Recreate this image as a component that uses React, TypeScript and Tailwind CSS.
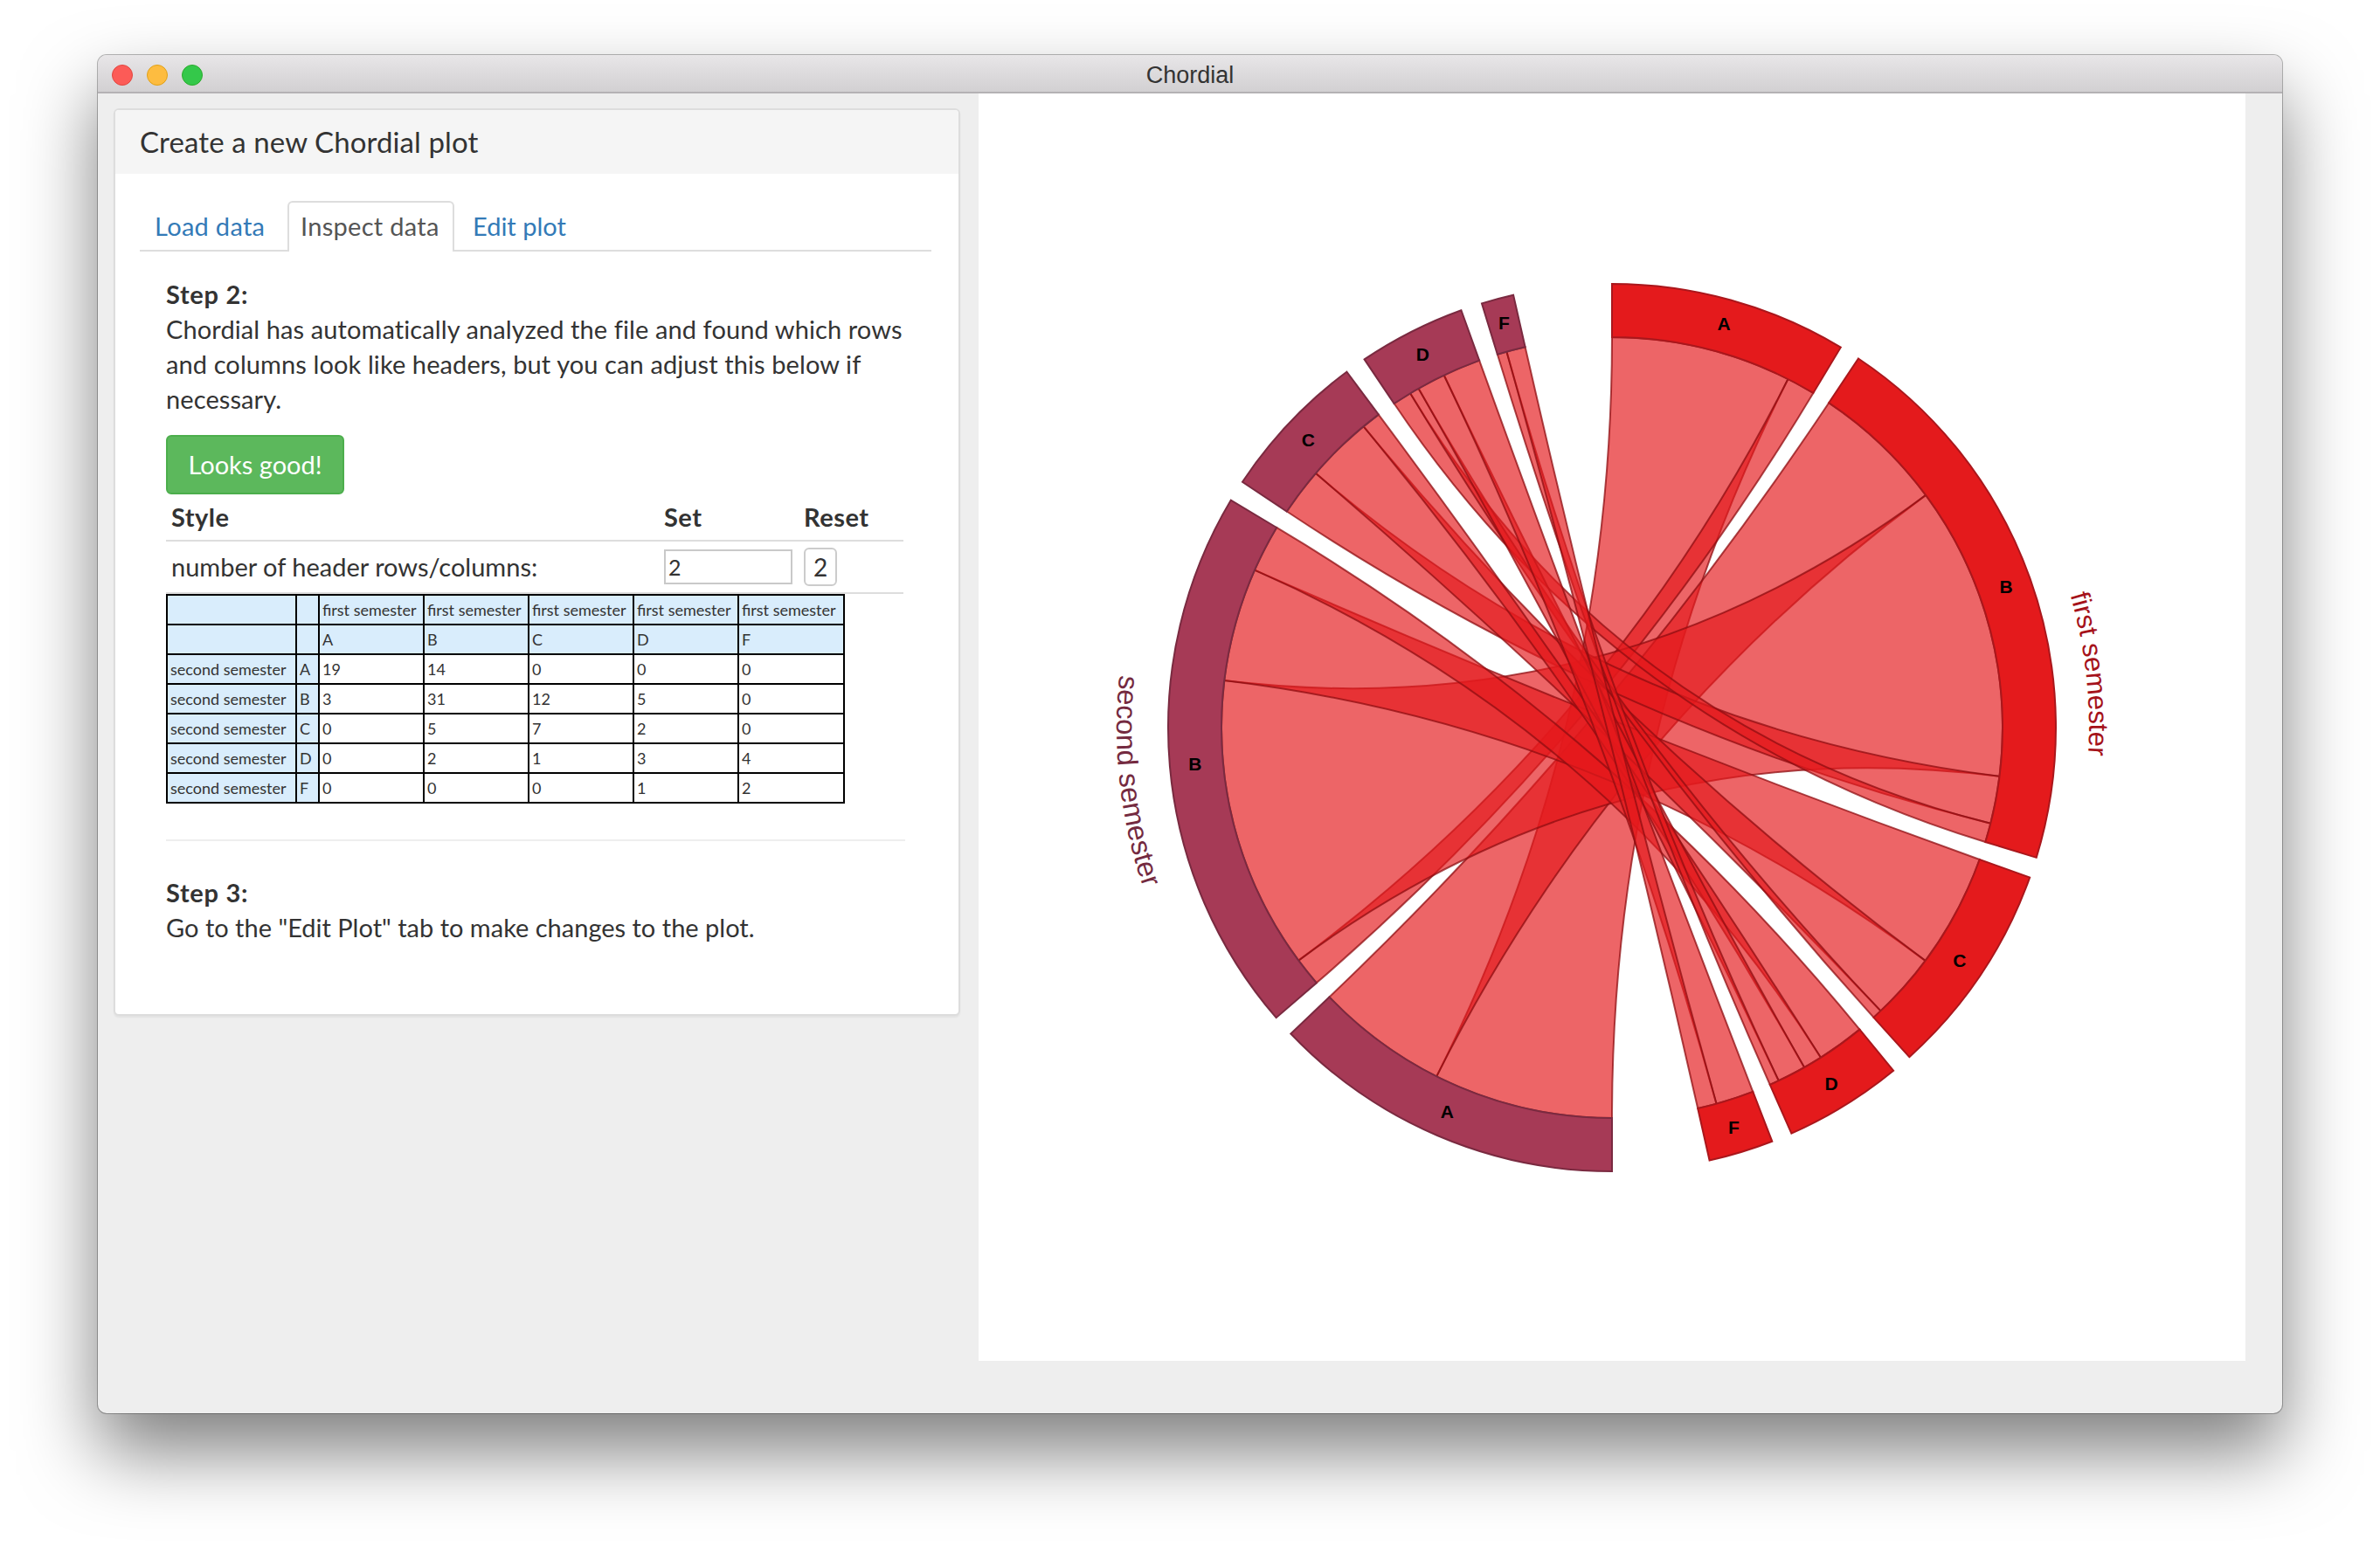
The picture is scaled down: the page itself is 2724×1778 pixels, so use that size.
import React from "react";

const R_IN = 447;
const R_OUT = 508;
const UNIT_RIGHT = 1.41;
const UNIT_LEFT = 1.405;
const GAP_RIGHT = 2.7;
const GAP_LEFT = 2.8;
const CX = 725;
const CY = 726;

const names = ["A", "B", "C", "D", "F"];
const matrix = [
  [19, 14, 0, 0, 0],
  [3, 31, 12, 5, 0],
  [0, 5, 7, 2, 0],
  [0, 2, 1, 3, 4],
  [0, 0, 0, 1, 2],
];

const pt = (deg: number, r: number) => {
  const t = (deg * Math.PI) / 180;
  return [+(CX + r * Math.sin(t)).toFixed(2), +(CY - r * Math.cos(t)).toFixed(2)];
};

const arcPath = (a0: number, a1: number) => {
  const [x0, y0] = pt(a0, R_OUT);
  const [x1, y1] = pt(a1, R_OUT);
  const [x2, y2] = pt(a1, R_IN);
  const [x3, y3] = pt(a0, R_IN);
  const large = a1 - a0 > 180 ? 1 : 0;
  return `M${x0} ${y0}A${R_OUT} ${R_OUT} 0 ${large} 1 ${x1} ${y1}L${x2} ${y2}A${R_IN} ${R_IN} 0 ${large} 0 ${x3} ${y3}Z`;
};

const ribbonPath = (a0: number, a1: number, b0: number, b1: number) => {
  const [x0, y0] = pt(a0, R_IN);
  const [x1, y1] = pt(a1, R_IN);
  const [x2, y2] = pt(b0, R_IN);
  const [x3, y3] = pt(b1, R_IN);
  return `M${x0} ${y0}A${R_IN} ${R_IN} 0 0 1 ${x1} ${y1}Q${CX} ${CY} ${x2} ${y2}A${R_IN} ${R_IN} 0 0 1 ${x3} ${y3}Q${CX} ${CY} ${x0} ${y0}Z`;
};

function buildChord() {
  const colStart: number[] = [];
  const rowStart: number[] = [];
  const arcs: { side: "first" | "second"; a0: number; a1: number; name: string }[] = [];
  let a = 0;
  names.forEach((n, c) => {
    const total = matrix.reduce((s, row) => s + row[c], 0) * UNIT_RIGHT;
    colStart.push(a);
    arcs.push({ side: "first", a0: a, a1: a + total, name: n });
    a += total + GAP_RIGHT;
  });
  a = 180;
  names.forEach((n, r) => {
    const total = matrix[r].reduce((s, v) => s + v, 0) * UNIT_LEFT;
    rowStart.push(a);
    arcs.push({ side: "second", a0: a, a1: a + total, name: n });
    a += total + GAP_LEFT;
  });
  const ribbons: string[] = [];
  const colCursor = [...colStart];
  const rowCursor = [...rowStart];
  matrix.forEach((row, r) => {
    row.forEach((v, c) => {
      if (!v) return;
      const wc = v * UNIT_RIGHT;
      const wr = v * UNIT_LEFT;
      ribbons.push(ribbonPath(colCursor[c], colCursor[c] + wc, rowCursor[r], rowCursor[r] + wr));
      colCursor[c] += wc;
      rowCursor[r] += wr;
    });
  });
  return { arcs, ribbons };
}

const arcLine = (a0: number, a1: number, r: number) => {
  const [x0, y0] = pt(a0, r);
  const [x1, y1] = pt(a1, r);
  return `M${x0} ${y0}A${r} ${r} 0 0 ${a1 > a0 ? 1 : 0} ${x1} ${y1}`;
};

function Chord() {
  const { arcs, ribbons } = buildChord();
  return (
    <svg width={1450} height={1451} viewBox="0 0 1450 1451" className="block">
      <defs>
        <path id="label-first" d={arcLine(59.6, 107.6, 546)} />
        <path id="label-second" d={arcLine(289.6, 237.6, 567)} />
      </defs>
      {ribbons.map((d, i) => (
        <path key={i} d={d} fill="#e41a1c" fillOpacity={0.67} stroke="#8f0d12" strokeOpacity={0.75} strokeWidth={2} />
      ))}
      {arcs.map((s, i) => (
        <path
          key={i}
          d={arcPath(s.a0, s.a1)}
          fill={s.side === "first" ? "#e41a1c" : "#a63a56"}
          stroke={s.side === "first" ? "#aa171c" : "#7a2a40"}
          strokeWidth={2}
        />
      ))}
      {arcs.map((s, i) => {
        const [x, y] = pt((s.a0 + s.a1) / 2, 479);
        return (
          <text key={i} x={x} y={y + 7} textAnchor="middle" fontFamily="'Liberation Sans', Arial, sans-serif" fontWeight={700} fontSize={21} fill="#000">
            {s.name}
          </text>
        );
      })}
      <text fontFamily="'Liberation Sans', Arial, sans-serif" fontSize={31} fill="#a5121a">
        <textPath href="#label-first" startOffset="50%" textAnchor="middle">first semester</textPath>
      </text>
      <text fontFamily="'Liberation Sans', Arial, sans-serif" fontSize={32.5} fill="#742a40">
        <textPath href="#label-second" startOffset="50%" textAnchor="middle">second semester</textPath>
      </text>
    </svg>
  );
}

const headerCell = "border-2 border-black bg-[#d9edfc] px-[3px] text-left font-normal whitespace-nowrap overflow-hidden";
const bodyCell = "border-2 border-black bg-white px-[3px] text-left font-normal whitespace-nowrap overflow-hidden";

function DataTable() {
  return (
    <table className="table-fixed border-collapse w-[775px] text-[18px] leading-[22px] text-[#333]">
      <colgroup>
        <col className="w-[148px]" />
        <col className="w-[26px]" />
        <col className="w-[120px]" />
        <col className="w-[120px]" />
        <col className="w-[120px]" />
        <col className="w-[120px]" />
        <col className="w-[121px]" />
      </colgroup>
      <tbody>
        <tr className="h-[34px]">
          <td className={headerCell}></td>
          <td className={headerCell}></td>
          {names.map((n) => (
            <td key={n} className={headerCell}>first semester</td>
          ))}
        </tr>
        <tr className="h-[34px]">
          <td className={headerCell}></td>
          <td className={headerCell}></td>
          {names.map((n) => (
            <td key={n} className={headerCell}>{n}</td>
          ))}
        </tr>
        {matrix.map((row, r) => (
          <tr key={r} className="h-[34px]">
            <td className={headerCell}>second semester</td>
            <td className={headerCell}>{names[r]}</td>
            {row.map((v, c) => (
              <td key={c} className={bodyCell}>{v}</td>
            ))}
          </tr>
        ))}
      </tbody>
    </table>
  );
}

function StyleTable() {
  return (
    <table className="table-fixed border-collapse w-[844px] text-[#333]">
      <colgroup>
        <col className="w-[564px]" />
        <col className="w-[160px]" />
        <col className="w-[120px]" />
      </colgroup>
      <thead>
        <tr className="h-[53px] border-b-2 border-[#ddd]">
          <th className="px-[6px] text-left font-bold tracking-[0.5px]">Style</th>
          <th className="px-[6px] text-left font-bold tracking-[0.5px]">Set</th>
          <th className="px-[6px] text-left font-bold tracking-[0.5px]">Reset</th>
        </tr>
      </thead>
      <tbody>
        <tr className="h-[60px] border-b-2 border-[#ddd]">
          <td className="px-[6px]">number of header rows/columns:</td>
          <td className="px-[6px]">
            <input
              readOnly
              value="2"
              className="block w-[147px] h-[40px] border-2 border-[#c9c9c9] bg-white px-[3px] text-[25px] text-[#333] outline-none"
            />
          </td>
          <td className="px-[6px]">
            <button className="flex items-center justify-center w-[38px] h-[44px] rounded-[6px] border-2 border-[#ccc] bg-white text-[28px] text-[#333]">
              2
            </button>
          </td>
        </tr>
      </tbody>
    </table>
  );
}

function Panel() {
  return (
    <section className="w-[969px] h-[1039px] rounded-[6px] border-2 border-[#dddddd] bg-white overflow-hidden shadow-[0_2px_2px_rgba(0,0,0,0.05)]">
      <header className="h-[73px] bg-[#f5f5f5] px-[28px] flex items-center text-[33px] tracking-[0.1px] text-[#333]">
        Create a new Chordial plot
      </header>
      <div className="pl-[28px] pr-[31px] pt-[31px]">
        <nav className="flex items-end h-[58px] border-b-2 border-[#ddd] text-[29px] tracking-[0.3px]">
          <a className="w-[165px] mr-[4px] pl-[17px] text-[#337ab7] leading-[54px] whitespace-nowrap">Load data</a>
          <a className="w-[191px] h-[58px] mr-[6px] pl-[13px] rounded-t-[6px] border-2 border-b-0 border-[#ddd] bg-white text-[#555] leading-[54px] -mb-[2px] whitespace-nowrap">Inspect data</a>
          <a className="pl-[15px] text-[#337ab7] leading-[54px] tracking-normal">Edit plot</a>
        </nav>
        <div className="px-[30px] pt-[29px] text-[29px] leading-[40px] text-[#333]">
          <p className="font-bold tracking-[0.7px]">Step 2:</p>
          <p className="tracking-[0.1px]">Chordial has automatically analyzed the file and found which rows and columns look like headers, but you can adjust this below if necessary.</p>
          <button className="mt-[21px] block w-[204px] h-[68px] rounded-[6px] border-2 border-[#4cae4c] bg-[#5cb85c] text-white text-[29px]">
            Looks good!
          </button>
          <StyleTable />
          <DataTable />
          <hr className="mt-[41px] border-0 h-[2px] bg-[#eee] w-[846px]" />
          <p className="mt-[39px] font-bold tracking-[0.7px]">Step 3:</p>
          <p>Go to the "Edit Plot" tab to make changes to the plot.</p>
        </div>
      </div>
    </section>
  );
}

export default function App() {
  return (
    <div className="w-[2724px] h-[1778px] bg-white overflow-hidden pt-[63px] pl-[112px] font-[Lato,'Liberation_Sans',sans-serif]">
      <div className="w-[2500px] h-[1555px] rounded-[10px] overflow-hidden bg-[#eeeeee] shadow-[0_0_0_1px_rgba(0,0,0,0.28),0_44px_85px_rgba(0,0,0,0.5)]">
        <div className="h-[44px] grid grid-cols-[1fr_auto_1fr] items-center bg-gradient-to-b from-[#e8e6e8] to-[#d2d0d2] border-b-2 border-[#b4b2b4] pt-[4px] px-[16px]">
          <div className="flex gap-[16px]">
            <span className="w-[24px] h-[24px] rounded-full bg-[#fc5b57] border border-[#e2463f]" />
            <span className="w-[24px] h-[24px] rounded-full bg-[#fdbc40] border border-[#e1a116]" />
            <span className="w-[24px] h-[24px] rounded-full bg-[#34c84a] border border-[#2aac2c]" />
          </div>
          <div className="text-[27px] leading-none text-[#333] font-['Liberation_Sans',Arial,sans-serif]">Chordial</div>
          <div />
        </div>
        <div className="flex">
          <div className="w-[1008px] pl-[18px] pt-[17px]">
            <Panel />
          </div>
          <div className="w-[1450px] h-[1451px] bg-white">
            <Chord />
          </div>
        </div>
      </div>
    </div>
  );
}
